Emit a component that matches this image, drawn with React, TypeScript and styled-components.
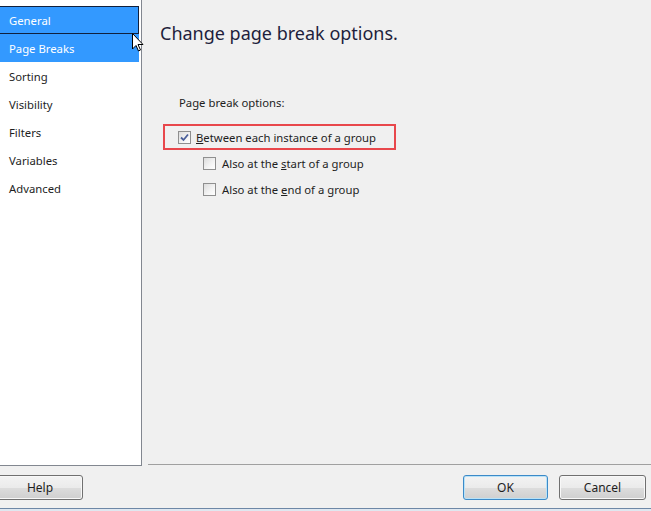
import React from 'react';
import styled, { createGlobalStyle } from 'styled-components';

const GlobalStyle = createGlobalStyle`
  html, body {
    margin: 0;
    padding: 0;
    background: #f0f0f0;
  }
  body {
    font-family: "Noto Sans", "Open Sans", sans-serif;
    font-size: 11.3px;
    color: #1e1e1e;
  }
`;

const Dialog = styled.div`
  position: relative;
  width: 651px;
  height: 511px;
  background: #f0f0f0;
  display: flex;
  flex-direction: column;
  overflow: hidden;
`;

const Body = styled.div`
  display: flex;
  flex-direction: row;
  height: 466px;
`;

const Nav = styled.div`
  width: 139px;
  padding: 6px 2px 0 0;
  background: #ffffff;
  border-right: 1px solid #828790;
  border-bottom: 1px solid #828790;
  display: flex;
  flex-direction: column;
`;

const NavItem = styled.div<{ $selected?: boolean; $focused?: boolean }>`
  height: 28px;
  box-sizing: border-box;
  padding-left: 9px;
  display: flex;
  align-items: center;
  background: ${(p) => (p.$selected ? '#3399ff' : 'transparent')};
  color: ${(p) => (p.$selected ? '#ffffff' : '#1e1e1e')};
  border: 1px solid ${(p) => (p.$focused ? '#10203c' : 'transparent')};
  border-left: none;
`;

const Content = styled.div`
  flex: 1;
  margin-left: 6px;
  padding: 20px 0 0 12px;
  border-bottom: 1px solid #a0a0a0;
  margin-bottom: 1px;
`;

const Title = styled.div`
  font-size: 18px;
  line-height: 26px;
  color: #1e1e3c;
`;

const GroupLabel = styled.div`
  margin: 50px 0 0 19px;
  line-height: 14px;
`;

const Option = styled.label<{ $indent?: number; $highlight?: boolean }>`
  display: flex;
  align-items: center;
  gap: ${(p) => (p.$highlight ? 5 : 6)}px;
  box-sizing: border-box;
  height: 26px;
  margin-left: ${(p) => p.$indent ?? 0}px;
  padding-left: ${(p) => (p.$highlight ? 13 : 0)}px;
  width: ${(p) => (p.$highlight ? '233px' : 'auto')};
  border: ${(p) => (p.$highlight ? '2px solid #e8474c' : 'none')};
`;

const Box = styled.span`
  width: 11px;
  height: 11px;
  border: 1px solid #8f8f8f;
  background: linear-gradient(135deg, #dcdcdc 0%, #f4f4f4 60%, #ffffff 100%);
  display: inline-flex;
  align-items: center;
  justify-content: center;
  flex-shrink: 0;
`;

const Key = styled.span`
  text-decoration: underline;
`;

const Footer = styled.div`
  display: flex;
  flex-direction: row;
  align-items: center;
  height: 42px;
  padding: 0 5px 0 0;
`;

const Button = styled.div<{ $default?: boolean; $width?: number }>`
  width: ${(p) => p.$width ?? 85}px;
  height: 25px;
  box-sizing: border-box;
  border-radius: 3px;
  border: 1px solid ${(p) => (p.$default ? '#3c8ac8' : '#707070')};
  box-shadow: ${(p) => (p.$default ? 'inset 0 0 0 1px #b8e2f8' : 'inset 0 0 0 1px #f8f8f8')};
  background: linear-gradient(#f3f3f3 0%, #ebebeb 50%, #dddddd 51%, #cfcfcf 100%);
  display: flex;
  align-items: center;
  justify-content: center;
  color: #1e1e1e;
  font-size: 12px;
`;

const HelpButton = styled(Button)`
  margin-left: -3px;
`;

const Spacer = styled.div`
  flex: 1;
`;

const ButtonGap = styled.div`
  width: 11px;
`;

const BottomEdge = styled.div`
  flex: 1;
  border-top: 1px solid #6d87a6;
  background: #dfe7f0;
`;

const Cursor = styled.svg`
  position: absolute;
  left: 132px;
  top: 33px;
`;

const Check = () => (
  <svg width="9" height="9" viewBox="0 0 9 9">
    <path d="M1 4.5 L3.5 7 L8 1.5" fill="none" stroke="#4a5f9a" strokeWidth="1.8" />
  </svg>
);

const navItems = ['General', 'Page Breaks', 'Sorting', 'Visibility', 'Filters', 'Variables', 'Advanced'];

const App: React.FC = () => {
  return (
    <Dialog>
      <GlobalStyle />
      <Body>
        <Nav>
          {navItems.map((name, i) => (
            <NavItem key={name} $selected={i < 2} $focused={i === 0}>
              {name}
            </NavItem>
          ))}
        </Nav>
        <Content>
          <Title>Change page break options.</Title>
          <GroupLabel>Page break options:</GroupLabel>
          <Option $highlight $indent={3} style={{ marginTop: 14 }}>
            <Box>
              <Check />
            </Box>
            <span>
              <Key>B</Key>etween each instance of a group
            </span>
          </Option>
          <Option $indent={43}>
            <Box />
            <span>
              Also at the <Key>s</Key>tart of a group
            </span>
          </Option>
          <Option $indent={43}>
            <Box />
            <span>
              Also at the <Key>e</Key>nd of a group
            </span>
          </Option>
        </Content>
      </Body>
      <Footer>
        <HelpButton $width={86}>Help</HelpButton>
        <Spacer />
        <Button $default>OK</Button>
        <ButtonGap />
        <Button $width={87}>Cancel</Button>
      </Footer>
      <BottomEdge />
      <Cursor width="12" height="19" viewBox="0 0 12 19">
        <path d="M0.5 0.5 L0.5 16 L4 12.5 L6.5 18 L8.5 17 L6 11.5 L11 11.5 Z" fill="#ffffff" stroke="#000000" strokeWidth="1" />
      </Cursor>
    </Dialog>
  );
};

export default App;
